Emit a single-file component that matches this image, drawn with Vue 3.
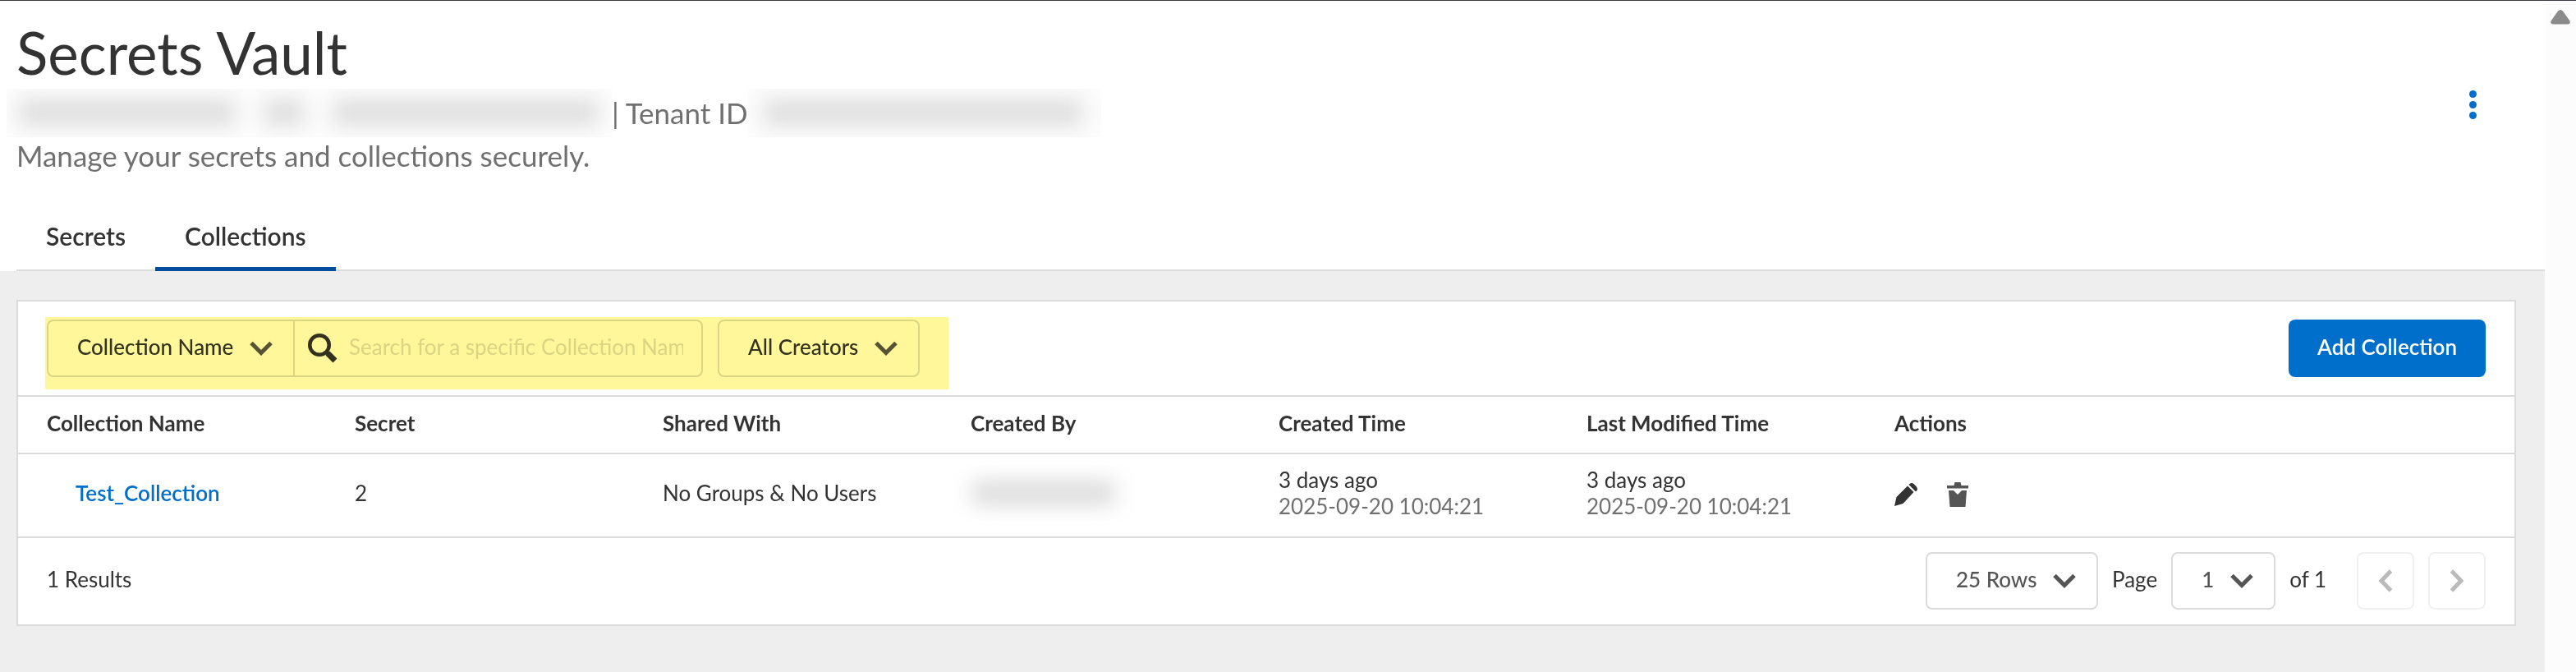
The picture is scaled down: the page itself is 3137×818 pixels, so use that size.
<template>
  <div class="layout">
    <main class="page">
      <header class="header">
        <div class="heading">
          <h1>Secrets Vault</h1>
          <div class="tenant">
            <span class="redacted account" aria-hidden="true">
              <i class="w-long"></i><i class="w-short"></i><i class="w-longer"></i>
            </span>
            <span class="tenant-label">| Tenant ID</span>
            <span class="redacted tenant-id" aria-hidden="true"><i class="fill"></i></span>
          </div>
          <p>Manage your secrets and collections securely.</p>
        </div>
        <button class="more" type="button" aria-label="More">
          <svg width="9" height="35" viewBox="0 0 9 35" fill="currentColor">
            <circle cx="4.5" cy="4.5" r="4.5" />
            <circle cx="4.5" cy="17.5" r="4.5" />
            <circle cx="4.5" cy="30.5" r="4.5" />
          </svg>
        </button>
      </header>

      <nav class="tabs">
        <button
          v-for="tab in tabs"
          :key="tab"
          type="button"
          :class="{ active: tab === activeTab }"
          @click="activeTab = tab"
        >
          {{ tab }}
        </button>
      </nav>

      <section class="content">
        <div class="card">
          <div class="toolbar">
            <div class="filters">
              <div class="search-group">
                <label class="select">
                  <select v-model="searchBy" aria-label="Search by">
                    <option>Collection Name</option>
                    <option>Secret</option>
                  </select>
                  <svg class="chevron" viewBox="0 0 28 18"><path d="M2 2.500l12 12 12-12" /></svg>
                </label>
                <label class="search">
                  <svg width="36" height="36" viewBox="0 0 36 36" fill="none" stroke="#333">
                    <circle cx="14" cy="14" r="11.75" stroke-width="4.5" />
                    <path d="M22 22l2.500 2.500" stroke-width="5" />
                    <path d="M24 24l9 9" stroke-width="7" />
                  </svg>
                  <input
                    v-model="query"
                    type="text"
                    aria-label="Search"
                    placeholder="Search for a specific Collection Name"
                  />
                </label>
              </div>
              <label class="select boxed">
                <select v-model="creator" aria-label="Creators">
                  <option>All Creators</option>
                </select>
                <svg class="chevron" viewBox="0 0 28 18"><path d="M2 2.500l12 12 12-12" /></svg>
              </label>
              <div class="highlight"></div>
            </div>
            <button class="primary" type="button">Add Collection</button>
          </div>

          <table>
            <colgroup>
              <col v-for="n in 6" :key="n" class="col" />
              <col />
            </colgroup>
            <thead>
              <tr>
                <th v-for="column in columns" :key="column">{{ column }}</th>
              </tr>
            </thead>
            <tbody>
              <tr v-for="row in rows" :key="row.name">
                <td><a href="#" class="name">{{ row.name }}</a></td>
                <td>{{ row.secrets }}</td>
                <td>{{ row.sharedWith }}</td>
                <td>
                  <span class="redacted creator" aria-hidden="true"><i class="fill"></i></span>
                </td>
                <td>
                  {{ row.created.ago }}
                  <div class="date">{{ row.created.date }}</div>
                </td>
                <td>
                  {{ row.modified.ago }}
                  <div class="date">{{ row.modified.date }}</div>
                </td>
                <td>
                  <div class="actions">
                    <button type="button" aria-label="Edit">
                      <svg width="28" height="28" viewBox="0 0 28 28" fill="#333">
                        <path d="M0 28l2.500-11L16 3.500l7.500 7.500L10.500 25z" />
                        <path d="M17.500 2l1-1q2.500-2 5.500.500l2.500 2.500q2.500 3 .500 5.500l-1 1z" />
                      </svg>
                    </button>
                    <button type="button" aria-label="Delete">
                      <svg width="26" height="30" viewBox="0 0 26 30" fill="#555">
                        <path d="M9.500 0h7l1 4H26v3.500H0V4h8.500z" />
                        <path d="M2 10h6l5 5 5-5h6l-1.500 20h-19z" />
                      </svg>
                    </button>
                  </div>
                </td>
              </tr>
            </tbody>
          </table>

          <footer class="footer">
            <span class="text">{{ rows.length }} Results</span>
            <div class="pagination">
              <label class="select boxed muted">
                <select v-model="pageSize" aria-label="Rows per page">
                  <option>25 Rows</option>
                </select>
                <svg class="chevron" viewBox="0 0 28 18"><path d="M2 2.500l12 12 12-12" /></svg>
              </label>
              <label for="page" class="text">Page</label>
              <div class="select boxed muted">
                <select id="page" v-model="page">
                  <option>1</option>
                </select>
                <svg class="chevron" viewBox="0 0 28 18"><path d="M2 2.500l12 12 12-12" /></svg>
              </div>
              <span class="text">of 1</span>
              <div class="arrows">
                <button type="button" disabled aria-label="Previous page">
                  <svg width="18" height="28" viewBox="0 0 18 28"><path d="M15.500 2L4 14l11.500 12" /></svg>
                </button>
                <button type="button" disabled aria-label="Next page">
                  <svg width="18" height="28" viewBox="0 0 18 28"><path d="M2.500 2L14 14 2.500 26" /></svg>
                </button>
              </div>
            </div>
          </footer>
        </div>
      </section>
    </main>
    <div class="scrollbar">
      <svg width="24" height="18" viewBox="0 0 24 18" fill="#8b8b8b">
        <path d="M9 1.500q3-3 6 0l8.500 12q1 4-2.500 4H3q-3.500 0-2.500-4z" />
      </svg>
    </div>
  </div>
</template>

<script setup>
import { ref } from "vue";

const tabs = ["Secrets", "Collections"];
const activeTab = ref("Collections");

const searchBy = ref("Collection Name");
const query = ref("");
const creator = ref("All Creators");
const pageSize = ref("25 Rows");
const page = ref("1");

const columns = [
  "Collection Name",
  "Secret",
  "Shared With",
  "Created By",
  "Created Time",
  "Last Modified Time",
  "Actions",
];

const rows = ref([
  {
    name: "Test_Collection",
    secrets: 2,
    sharedWith: "No Groups & No Users",
    created: { ago: "3 days ago", date: "2025-09-20 10:04:21" },
    modified: { ago: "3 days ago", date: "2025-09-20 10:04:21" },
  },
]);
</script>

<style>
body {
  margin: 0;
}
</style>

<style scoped>
* {
  box-sizing: border-box;
}

.layout {
  display: flex;
  min-height: 100vh;
  border-top: 1px solid #3a3a46;
  background-color: #fff;
  color: #333;
  font-family: Lato, "Open Sans", sans-serif;
  font-size: 26px;
  line-height: 32px;
}

button,
select,
input {
  margin: 0;
  padding: 0;
  border: none;
  background: none;
  color: inherit;
  font: inherit;
}

button {
  cursor: pointer;
}

svg {
  display: block;
}

.page {
  display: flex;
  flex: 1;
  flex-direction: column;
  min-width: 0;
}

.scrollbar {
  display: flex;
  justify-content: center;
  width: 38px;
  padding-top: 11px;
  background-color: #fcfcfc;
}

.header {
  display: flex;
  justify-content: space-between;
  align-items: center;
  padding: 16px 80px 0 20px;
  color: #707070;
  font-size: 35px;
  line-height: 52px;
}

h1 {
  margin: 0;
  color: #333;
  font-size: 71px;
  font-weight: 400;
  line-height: 94px;
}

.header p {
  margin: 0;
}

.more {
  margin-top: 22px;
  padding: 10px 3px;
  color: #006fcc;
}

.tenant {
  display: flex;
  align-items: center;
  height: 52px;
}

.tenant-label {
  white-space: nowrap;
}

.redacted {
  display: flex;
  align-items: center;
  overflow: hidden;
  background-color: #fcfcfc;
}

.redacted i {
  height: 32px;
  background-color: #dedede;
  filter: blur(12px);
}

.account {
  gap: 36px;
  width: 737px;
  height: 59px;
  margin-left: -12px;
  padding: 0 16px;
}

.w-long {
  width: 262px;
}

.w-short {
  width: 48px;
}

.w-longer {
  width: 322px;
}

.fill {
  flex: 1;
}

.tenant-id {
  width: 430px;
  height: 59px;
  padding: 0 24px 0 20px;
}

.tabs {
  display: flex;
  margin: 34px 0 0 20px;
  background: linear-gradient(#dadbdb, #dadbdb) bottom / 100% 2px no-repeat;
}

.tabs button {
  padding: 20px 36px;
  border-bottom: 5px solid transparent;
  font-size: 30px;
  font-weight: 600;
  line-height: 36px;
}

.tabs .active {
  border-color: #004c9d;
}

.content {
  flex: 1;
  padding: 35px 35px 56px 20px;
  background-color: #eee;
}

.card {
  border: 2px solid #dadbdb;
  background-color: #fff;
}

.toolbar {
  display: flex;
  justify-content: space-between;
  padding: 22px 35px;
  border-bottom: 2px solid #dadbdb;
}

.filters {
  position: relative;
  display: flex;
  gap: 18px;
}

/* marker stroke lying over the filters */
.highlight {
  position: absolute;
  inset: -3px -35px -15px -2px;
  background-color: #fff799;
  mix-blend-mode: multiply;
  pointer-events: none;
}

.search-group {
  display: flex;
  width: 799px;
  height: 70px;
  border: 2px solid #dadbdb;
  border-radius: 8px;
}

.select {
  position: relative;
  display: flex;
}

.select select {
  padding: 0 72px 4px 35px;
  appearance: none;
  outline: none;
  font-weight: 500;
}

.boxed {
  height: 70px;
  border: 2px solid #dadbdb;
  border-radius: 8px;
}

.muted {
  color: #555;
}

.chevron {
  position: absolute;
  top: 24px;
  right: 25px;
  width: 28px;
  height: 18px;
  fill: none;
  stroke: #555;
  stroke-width: 5;
  pointer-events: none;
}

.search {
  display: flex;
  flex: 1;
  align-items: center;
  gap: 14px;
  min-width: 0;
  padding: 0 22px 0 16px;
  border-left: 2px solid #dadbdb;
}

.search svg {
  flex-shrink: 0;
}

.search input {
  flex: 1;
  min-width: 0;
  padding-bottom: 4px;
  outline: none;
}

.search input::placeholder {
  color: #dadbdb;
}

.primary {
  height: 70px;
  padding: 0 35px 4px;
  border-radius: 8px;
  background-color: #006fcc;
  color: #fff;
  font-weight: 600;
}

table {
  width: 100%;
  border-spacing: 0;
  table-layout: fixed;
}

.col {
  width: 375px;
}

th,
td {
  border-bottom: 2px solid #dadbdb;
  text-align: left;
}

th {
  height: 70px;
  padding: 0 0 4px 35px;
  font-weight: 700;
}

td {
  height: 102px;
  padding: 0 0 6px 35px;
}

.name {
  margin-left: 35px;
  color: #006fcc;
  font-weight: 600;
  text-decoration: none;
}

.date {
  color: #707070;
}

.creator {
  width: 230px;
  height: 68px;
  margin-left: -26px;
  padding: 0 28px;
  background: none;
}

.actions {
  display: flex;
  align-items: center;
  gap: 36px;
  padding-top: 4px;
}

.footer {
  display: flex;
  justify-content: space-between;
  align-items: center;
  padding: 17px 35px 18px;
}

.text {
  padding-bottom: 4px;
}

.pagination,
.arrows {
  display: flex;
  align-items: center;
  gap: 17px;
}

.arrows {
  margin-left: 20px;
}

.arrows button {
  display: flex;
  justify-content: center;
  align-items: center;
  width: 70px;
  height: 70px;
  border: 2px solid #f0f0f0;
  border-radius: 8px;
}

.arrows svg {
  fill: none;
  stroke: #bababa;
  stroke-width: 5;
}
</style>
